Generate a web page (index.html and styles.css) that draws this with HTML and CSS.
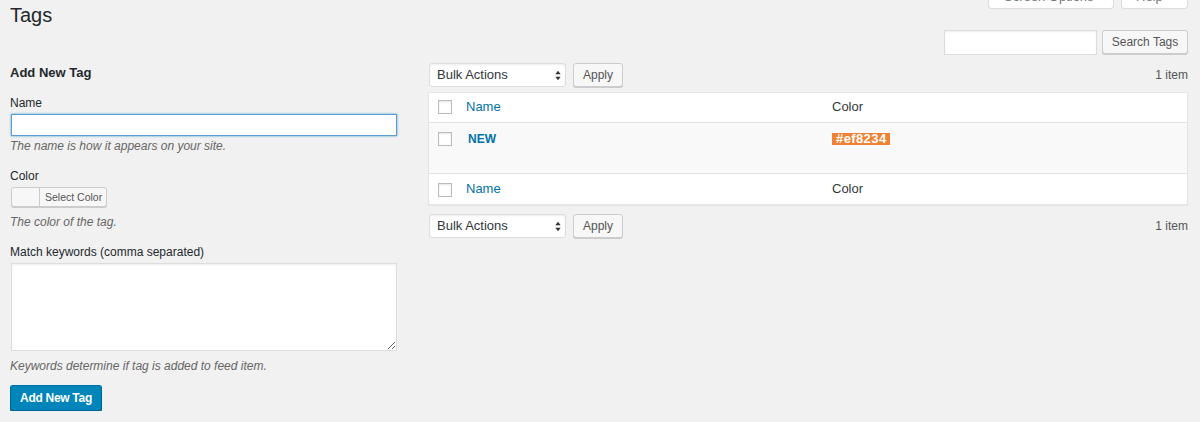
FILE: index.html
```html
<!DOCTYPE html>
<html lang="en">
<head>
<meta charset="utf-8">
<title>Tags</title>
<link rel="stylesheet" href="styles.css">
</head>
<body>
<div class="wrap">
  <div class="topbar">
    <h1 class="page-title">Tags</h1>
    <div class="meta-links">
      <span class="meta-tab tab-options">Screen Options</span>
      <span class="meta-tab tab-help">Help</span>
    </div>
  </div>
  <div class="search-row">
    <input class="search-input" type="search" aria-label="Search Tags">
    <button class="btn btn-search" type="button">Search Tags</button>
  </div>
  <div class="cols">
    <div class="col-left">
      <h2 class="form-title">Add New Tag</h2>
      <label class="field-label label-first">Name</label>
      <input class="text-input focused" type="text">
      <p class="desc desc-input">The name is how it appears on your site.</p>
      <label class="field-label">Color</label>
      <div class="color-result"><span class="swatch"></span><span class="color-text">Select Color</span></div>
      <p class="desc">The color of the tag.</p>
      <label class="field-label">Match keywords (comma separated)</label>
      <textarea class="keywords"></textarea>
      <p class="desc">Keywords determine if tag is added to feed item.</p>
      <button class="btn-primary" type="button">Add New Tag</button>
    </div>
    <div class="col-right">
      <div class="tablenav nav-top">
        <div class="select-box"><span>Bulk Actions</span>
          <svg class="select-arrow" width="6" height="11" viewBox="0 0 6 11"><path d="M0.3 4.3 L3 0.8 L5.7 4.3 Z M0.3 6.7 L3 10.2 L5.7 6.7 Z" fill="#333"/></svg>
        </div>
        <button class="btn btn-apply" type="button">Apply</button>
        <span class="count">1 item</span>
      </div>
      <table class="tags-table">
        <colgroup><col class="c-check"><col class="c-name"><col></colgroup>
        <thead>
          <tr>
            <th class="check-col"><span class="cb"></span></th>
            <th><a class="link">Name</a></th>
            <th>Color</th>
          </tr>
        </thead>
        <tbody>
          <tr class="alt">
            <td class="check-col"><span class="cb"></span></td>
            <td class="name-cell"><a class="row-title">NEW</a></td>
            <td><span class="badge">#ef8234</span></td>
          </tr>
        </tbody>
        <tfoot>
          <tr>
            <th class="check-col"><span class="cb"></span></th>
            <th><a class="link">Name</a></th>
            <th>Color</th>
          </tr>
        </tfoot>
      </table>
      <div class="tablenav nav-bottom">
        <div class="select-box"><span>Bulk Actions</span>
          <svg class="select-arrow" width="6" height="11" viewBox="0 0 6 11"><path d="M0.3 4.3 L3 0.8 L5.7 4.3 Z M0.3 6.7 L3 10.2 L5.7 6.7 Z" fill="#333"/></svg>
        </div>
        <button class="btn btn-apply" type="button">Apply</button>
        <span class="count">1 item</span>
      </div>
    </div>
  </div>
</div>
</body>
</html>
```
FILE: styles.css
```css
* { box-sizing: border-box; }
html, body { margin: 0; padding: 0; }
body {
  background: #f1f1f1;
  font-family: "Liberation Sans", Arial, sans-serif;
  font-size: 13px;
  color: #444;
  overflow: hidden;
}
.wrap { padding: 0 12px 0 10px; }

.topbar { display: flex; align-items: flex-start; height: 30px; }
.page-title {
  margin: 0; padding-top: 2px;
  font-size: 20px; line-height: 26px; font-weight: 400; color: #23282d;
}
.meta-links { margin-left: auto; display: flex; gap: 7px; margin-top: -20px; }
.meta-tab {
  display: block; height: 29px; padding-top: 7px;
  font-size: 13px; line-height: 20px; color: #72777c;
  background: #fff; border: 1px solid #ddd; border-top: none;
  border-radius: 0 0 4px 4px;
  box-shadow: 0 1px 1px -1px rgba(0,0,0,.1);
}
.tab-options { width: 126px; padding-left: 15px; }
.tab-help { width: 67px; padding-left: 14px; }

.search-row { display: flex; justify-content: flex-end; gap: 5px; height: 25px; }
.search-input {
  width: 153px; height: 25px; margin: 0;
  background: #fff; border: 1px solid #ddd;
  box-shadow: inset 0 1px 2px rgba(0,0,0,.07);
  outline: none;
}
.btn {
  height: 24px; margin: 0; padding: 0;
  font-family: "Liberation Sans", Arial, sans-serif;
  font-size: 12px; line-height: 22px; color: #555;
  background: #f7f7f7; border: 1px solid #ccc; border-radius: 3px;
  box-shadow: 0 1px 0 #ccc;
}
.btn-search { width: 86px; }

.cols { display: flex; }
.col-left { width: 418px; flex: none; }
.col-right { flex: 1; }

.form-title {
  margin: 9px 0 0; font-size: 13px; line-height: 18px; font-weight: 700; color: #23282d;
}
.field-label {
  display: block; margin-top: 14px;
  font-size: 12px; line-height: 16px; color: #23282d;
}
.label-first { margin-top: 13px; }
.text-input {
  display: block; width: 386px; height: 22px; margin: 3px 0 0 1px;
  background: #fff; border: 1px solid #ddd; outline: none;
}
.text-input.focused {
  border-color: #5b9dd9;
  box-shadow: 0 0 2px rgba(30,140,190,.8);
}
.desc {
  margin: 7px 0 0; font-size: 12px; line-height: 16px; font-style: italic; color: #666;
}
.desc-input { margin-top: 2px; }

.color-result {
  display: flex; width: 96px; height: 20px; margin: 3px 0 0 1px;
  background: #f7f7f7; border: 1px solid #ccc; border-radius: 3px;
  box-shadow: 0 1px 0 #ccc;
}
.swatch { width: 27px; flex: none; }
.color-text {
  flex: 1; padding-left: 5px;
  font-size: 10.5px; line-height: 18px; color: #555;
  border-left: 1px solid #ccc;
}

.keywords {
  display: block; width: 386px; height: 88px; margin: 3px 0 0 1px;
  background: #fff; border: 1px solid #ddd; resize: both;
  box-shadow: inset 0 1px 2px rgba(0,0,0,.07);
  outline: none;
}

.btn-primary {
  display: block; width: 92px; height: 26px; margin: 11px 0 0; padding: 0;
  font-family: "Liberation Sans", Arial, sans-serif;
  font-size: 12px; font-weight: 700; letter-spacing: -0.3px; line-height: 24px; color: #fff;
  background: #0085ba; border: 1px solid #0073aa; border-color: #0073aa #006799 #006799;
  border-radius: 3px; box-shadow: 0 1px 0 #006799;
}

.tablenav { display: flex; align-items: flex-start; height: 24px; }
.nav-top { margin: 8px 0 5px; }
.nav-bottom { margin-top: 9px; }
.select-box {
  display: flex; align-items: center; width: 137px; height: 24px; margin-left: 1px;
  padding: 0 4px 0 7px;
  font-size: 13px; line-height: 22px; color: #32373c;
  background: #fff; border: 1px solid #ddd; border-radius: 3px;
  box-shadow: inset 0 1px 2px rgba(0,0,0,.07);
}
.select-arrow { margin-left: auto; }
.btn-apply { width: 50px; margin-left: 7px; }
.count { margin-left: auto; font-size: 12px; line-height: 24px; color: #555; }

.tags-table {
  width: 760px; table-layout: fixed; border-collapse: separate; border-spacing: 0;
  background: #fff; border: 1px solid #e5e5e5;
  box-shadow: 0 1px 1px rgba(0,0,0,.04);
}
.c-check { width: 27px; }
.c-name { width: 366px; }
.tags-table th, .tags-table td {
  text-align: left; vertical-align: top; font-weight: 400;
  font-size: 13px; color: #32373c;
}
.tags-table thead th {
  padding: 5px 10px 7px; line-height: 17px; border-bottom: 1px solid #e1e1e1;
}
.tags-table tfoot th {
  padding: 6px 10px 7px; line-height: 17px; border-top: 1px solid #e1e1e1;
}
.tags-table thead th.check-col { padding: 7px 0 0 9px; }
.tags-table tfoot th.check-col { padding: 9px 0 0 9px; }
.tags-table td { padding: 7px 10px 25px; line-height: 18px; }
.tags-table td.check-col { padding: 9px 0 0 9px; }
.alt td { background: #f9f9f9; }
.cb {
  display: block; width: 14px; height: 14px;
  background: #fff; border: 1px solid #bbb;
  box-shadow: inset 0 1px 2px rgba(0,0,0,.1);
}
.link { color: #0073aa; }
.row-title { color: #0073aa; font-weight: 700; font-size: 12px; }
.name-cell { padding-left: 12px !important; }
.badge {
  display: block; width: fit-content; margin-top: 3px; padding: 0 3px 0 4px;
  background: #ef8234; color: #fff;
  font-size: 13px; font-weight: 700; letter-spacing: 0.4px; line-height: 12px;
}
```
